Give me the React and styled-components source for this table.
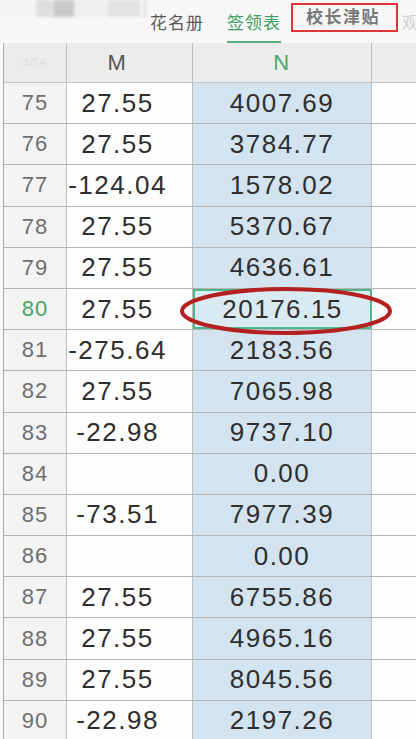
import React from 'react';
import styled, { createGlobalStyle, css } from 'styled-components';

const Global = createGlobalStyle`
  html, body {
    margin: 0;
    padding: 0;
    background: #fff;
  }
  body {
    font-family: "Liberation Sans", "Noto Sans CJK SC", Arial, sans-serif;
  }
`

const Page = styled.div`
  width: 416px;
  height: 739px;
  overflow: hidden;
  position: relative;
  background: #fafafa;
`

const TabBar = styled.div`
  height: 43px;
  display: flex;
  align-items: flex-start;
  background: #f7f7f7;
  white-space: nowrap;
`

const Blur = styled.div`
  width: 146px;
  flex: none;
  height: 17px;
  display: flex;
  filter: blur(1.5px);
  border-right: 2px solid #d8d8d8;
  box-sizing: border-box;
`

const Block = styled.div`
  width: ${p => p.w}px;
  background: ${p => p.c};
`

const Tab = styled.div`
  flex: none;
  margin-left: ${p => p.ml}px;
  padding-top: 9px;
  font-size: 17px;
  letter-spacing: 1px;
  color: ${p => (p.active ? '#3f9e63' : '#5a5a5a')};
  height: 43px;
  box-sizing: border-box;
  position: relative;
  ${p => p.active && css`
    &::after {
      content: '';
      position: absolute;
      left: 0;
      right: 0;
      bottom: 0;
      height: 2px;
      background: #59b07a;
    }
  `}
`

const Boxed = styled.div`
  flex: none;
  margin-left: 10px;
  margin-top: 3px;
  width: 107px;
  height: 29px;
  border: 2px solid #e0353a;
  box-sizing: border-box;
  font-size: 17px;
  letter-spacing: 1.5px;
  color: #777;
  font-weight: bold;
  padding-left: 13px;
  line-height: 25px;
`

const Faded = styled.div`
  flex: none;
  margin-left: 4px;
  padding-top: 9px;
  font-size: 17px;
  color: #d0d0d0;
`

const Sheet = styled.div`
  margin-left: 3px;
  border-left: 1px solid #aaa;
  position: relative;
`

const Row = styled.div`
  display: grid;
  grid-template-columns: 63px 126px 179px 1fr;
  height: ${p => (p.head ? 40 : 41.2)}px;
  box-sizing: border-box;
  border-bottom: 1px solid ${p => (p.head ? '#c6c6c6' : '#b4b4b4')};
  background: ${p => (p.head ? '#ececec' : '#fdfdfd')};
`

const Cell = styled.div`
  display: flex;
  align-items: center;
  justify-content: center;
  border-right: 1px solid #bdbdbd;
  box-sizing: border-box;
  color: #2e2e2e;
  font-size: 26px;
  letter-spacing: 1.5px;
  font-weight: 300;
`

const Num = styled(Cell)`
  background: ${p => (p.head ? '#ececec' : '#f3f3f3')};
  color: ${p => (p.sel ? '#46a463' : '#6e6e6e')};
  font-size: 22px;
  letter-spacing: 1px;
  ${p => p.head && css`
    color: #ddd;
    font-size: 13px;
  `}
`

const MCell = styled(Cell)`
  padding-right: 24px;
  ${p => p.head && css`
    font-size: 22px;
    color: #555;
  `}
`

const NCell = styled(Cell)`
  background: ${p => (p.head ? '#ececec' : p.sel ? '#d9eaf3' : '#d3e4f0')};
  ${p => p.head && css`
    font-size: 22px;
    color: #4aa86a;
  `}
  ${p => p.sel && css`
    border: 2px solid #4fb58a;
  `}
`

const Rest = styled.div`
  background: ${p => (p.head ? '#ececec' : '#fdfdfd')};
`

const Ring = styled.svg`
  position: absolute;
  left: 170px;
  top: 241px;
  pointer-events: none;
`

const rows = [
  [75, '27.55', '4007.69'],
  [76, '27.55', '3784.77'],
  [77, '-124.04', '1578.02'],
  [78, '27.55', '5370.67'],
  [79, '27.55', '4636.61'],
  [80, '27.55', '20176.15'],
  [81, '-275.64', '2183.56'],
  [82, '27.55', '7065.98'],
  [83, '-22.98', '9737.10'],
  [84, '', '0.00'],
  [85, '-73.51', '7977.39'],
  [86, '', '0.00'],
  [87, '27.55', '6755.86'],
  [88, '27.55', '4965.16'],
  [89, '27.55', '8045.56'],
  [90, '-22.98', '2197.26'],
];

export default function App() {
  return (
    <Page>
      <Global />
      <TabBar>
        <Blur>
          <Block w={36} c="#f5f5f5" />
          <Block w={18} c="#dedede" />
          <Block w={20} c="#c9c9c9" />
          <Block w={34} c="#efefef" />
          <Block w={32} c="#e3e3e3" />
        </Blur>
        <Tab ml={4}>花名册</Tab>
        <Tab ml={23} active>签领表</Tab>
        <Boxed>校长津贴</Boxed>
        <Faded>观</Faded>
      </TabBar>
      <Sheet>
        <Row head>
          <Num head>40A</Num>
          <MCell head>M</MCell>
          <NCell head>N</NCell>
          <Rest head />
        </Row>
        {rows.map(([n, m, v]) => (
          <Row key={n}>
            <Num sel={n === 80}>{n}</Num>
            <MCell>{m}</MCell>
            <NCell sel={n === 80}>{v}</NCell>
            <Rest />
          </Row>
        ))}
        <Ring width="224" height="54" viewBox="0 0 224 54">
          <ellipse cx="112" cy="27" rx="104" ry="22" fill="none" stroke="#b4201f" strokeWidth="4" />
        </Ring>
      </Sheet>
    </Page>
  );
}
